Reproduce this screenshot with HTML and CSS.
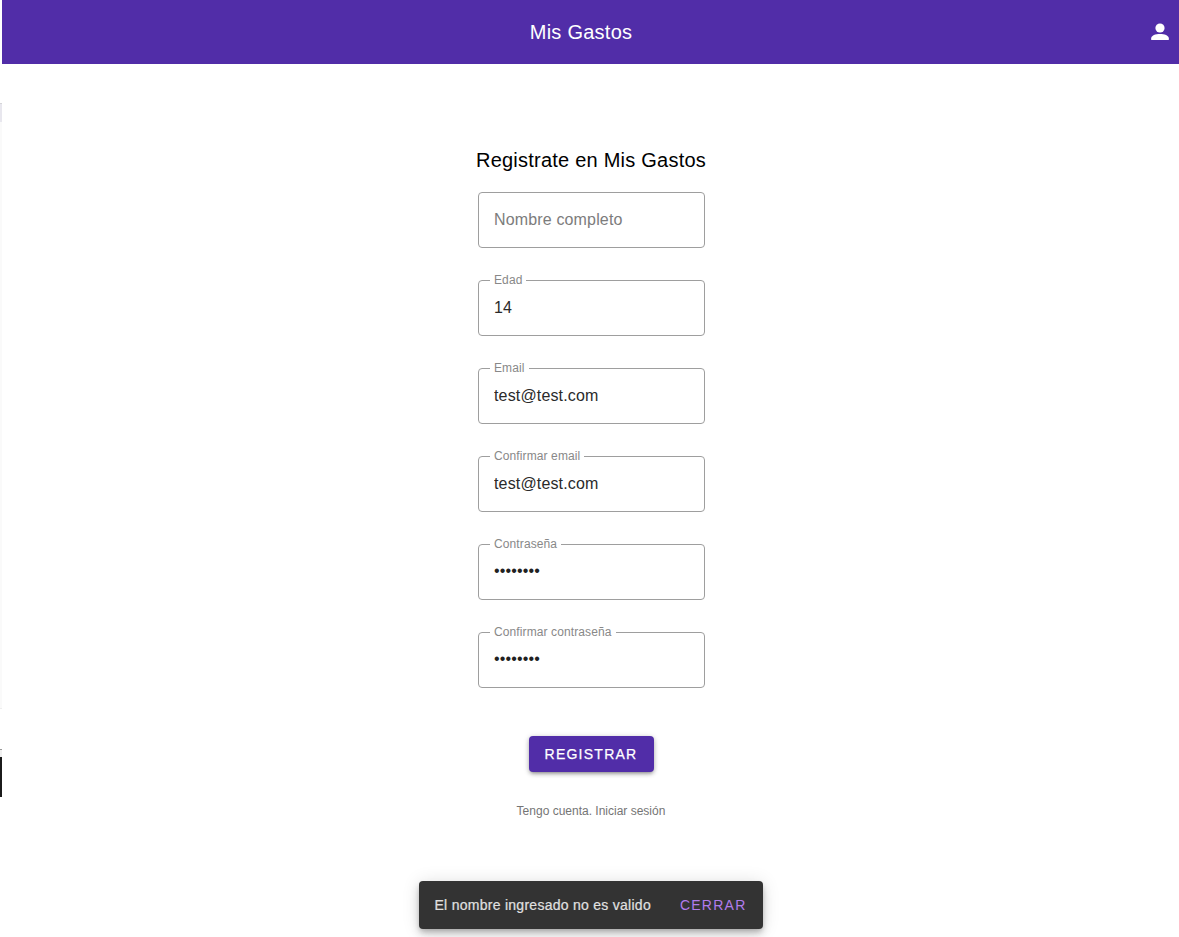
FILE: index.html
```html
<!DOCTYPE html>
<html lang="es">
<head>
<meta charset="utf-8">
<title>Mis Gastos</title>
<link rel="stylesheet" href="styles.css">
</head>
<body>
<div class="page-edge"><i class="edge-top"></i><i class="edge-panel"></i><i class="edge-line"></i><i class="edge-dark"></i></div>
<div class="app">
  <header class="toolbar">
    <h1 class="toolbar-title">Mis Gastos</h1>
    <svg class="user-icon" viewBox="0 0 24 24" width="24" height="24"><circle cx="12" cy="8" r="4.6"/><path d="M3.200 20v-1.700c0-2.900 4.400-4.300 8.800-4.300s8.800 1.400 8.800 4.300v1.700z"/></svg>
  </header>
  <form class="register">
    <h2 class="heading">Registrate en Mis Gastos</h2>
    <div class="field"><input class="field-input" type="text" placeholder="Nombre completo"></div>
    <fieldset class="field"><legend class="field-label">Edad</legend><input class="field-input" type="text" value="14"></fieldset>
    <fieldset class="field"><legend class="field-label">Email</legend><input class="field-input" type="text" value="test@test.com"></fieldset>
    <fieldset class="field"><legend class="field-label">Confirmar email</legend><input class="field-input" type="text" value="test@test.com"></fieldset>
    <fieldset class="field"><legend class="field-label">Contraseña</legend><input class="field-input password" type="password" value="12345678"></fieldset>
    <fieldset class="field"><legend class="field-label">Confirmar contraseña</legend><input class="field-input password" type="password" value="12345678"></fieldset>
    <button class="submit" type="button">REGISTRAR</button>
    <p class="login">Tengo cuenta. Iniciar sesión</p>
  </form>
  <div class="snackbar"><span class="message">El nombre ingresado no es valido</span><span class="close">CERRAR</span></div>
</div>
</body>
</html>
```
FILE: styles.css
```css
* { box-sizing: border-box; }
body {
  margin: 0;
  height: 937px;
  overflow: hidden;
  display: flex;
  background: #fff;
  font-family: "Liberation Sans", Arial, sans-serif;
}
.page-edge { width: 2px; display: flex; flex-direction: column; }
.edge-top { height: 19px; margin-top: 103px; background: #e8e7ee; border-top: 1px solid #d5d5d8; }
.edge-panel { height: 587px; background: #fafafa; border-bottom: 1px solid #eee; }
.edge-line { height: 8px; margin-top: 40px; border-top: 1px solid #999; background: #f0f0f0; }
.edge-dark { height: 40px; background: #1b1b1b; }
.app { flex: 1; display: flex; flex-direction: column; align-items: center; }
.toolbar {
  width: 100%;
  height: 64px;
  padding: 0 7px 0 31px;
  display: flex;
  align-items: center;
  background: #512da8;
  color: #fff;
}
.toolbar-title { flex: 1; margin: 0; padding-right: 19px; text-align: center; font: 400 20px/32px "Liberation Sans", Arial, sans-serif; letter-spacing: .25px; }
.user-icon { fill: #fff; }
.register { display: flex; flex-direction: column; align-items: center; padding: 80px 0 0 1px; }
.heading { margin: 0 0 16px; font: 400 20px/32px "Liberation Sans", Arial, sans-serif; letter-spacing: .23px; color: #000; white-space: nowrap; }
.field {
  width: 227px;
  height: 56px;
  margin: 0 0 32px;
  padding: 0;
  border: 1px solid #9e9e9e;
  border-radius: 4px;
}
fieldset.field { height: 62px; margin-top: -6px; }
.field-label {
  height: 13px;
  margin-left: 11px;
  padding: 0 4px 0 4.5px;
  font-size: 12px;
  line-height: 12px;
  letter-spacing: .11px;
  color: #888;
}
.field-input {
  display: block;
  width: 100%;
  height: 54px;
  padding: 0 15.5px;
  border: 0;
  outline: 0;
  background: transparent;
  font: 16px "Liberation Sans", Arial, sans-serif;
  letter-spacing: .15px;
  color: #2a2a2a;
}
.field-input::placeholder { color: #7c7c7c; }
fieldset .field-input { height: 42px; }
fieldset .password { padding-bottom: 2px; color: #212121; }
.submit {
  width: 125px;
  height: 36px;
  margin-top: 16px;
  padding: 0;
  border: 0;
  border-radius: 4px;
  background: #512da8;
  color: #fff;
  font: 400 14px "Liberation Sans", Arial, sans-serif;
  letter-spacing: 1.25px;
  -webkit-text-stroke: .25px #fff;
  box-shadow: 0 3px 3px -2px rgba(0,0,0,.2), 0 2px 4px rgba(0,0,0,.22), 0 1px 6px rgba(0,0,0,.15);
}
.login { margin: 29px 0 0; font-size: 12px; line-height: 20px; color: #757575; }
.snackbar {
  width: 344px;
  height: 48px;
  margin-top: auto;
  margin-bottom: 8px;
  padding: 0 16px;
  display: flex;
  align-items: center;
  justify-content: space-between;
  border-radius: 4px;
  background: #333;
  font-size: 14px;
  white-space: nowrap;
  box-shadow: 0 3px 5px -1px rgba(0,0,0,.2), 0 6px 10px rgba(0,0,0,.14), 0 1px 18px rgba(0,0,0,.12);
}
.message { color: #e0e0e0; letter-spacing: .27px; -webkit-text-stroke: .2px #e0e0e0; }
.close { color: #b17cec; letter-spacing: 1.25px; }
```
